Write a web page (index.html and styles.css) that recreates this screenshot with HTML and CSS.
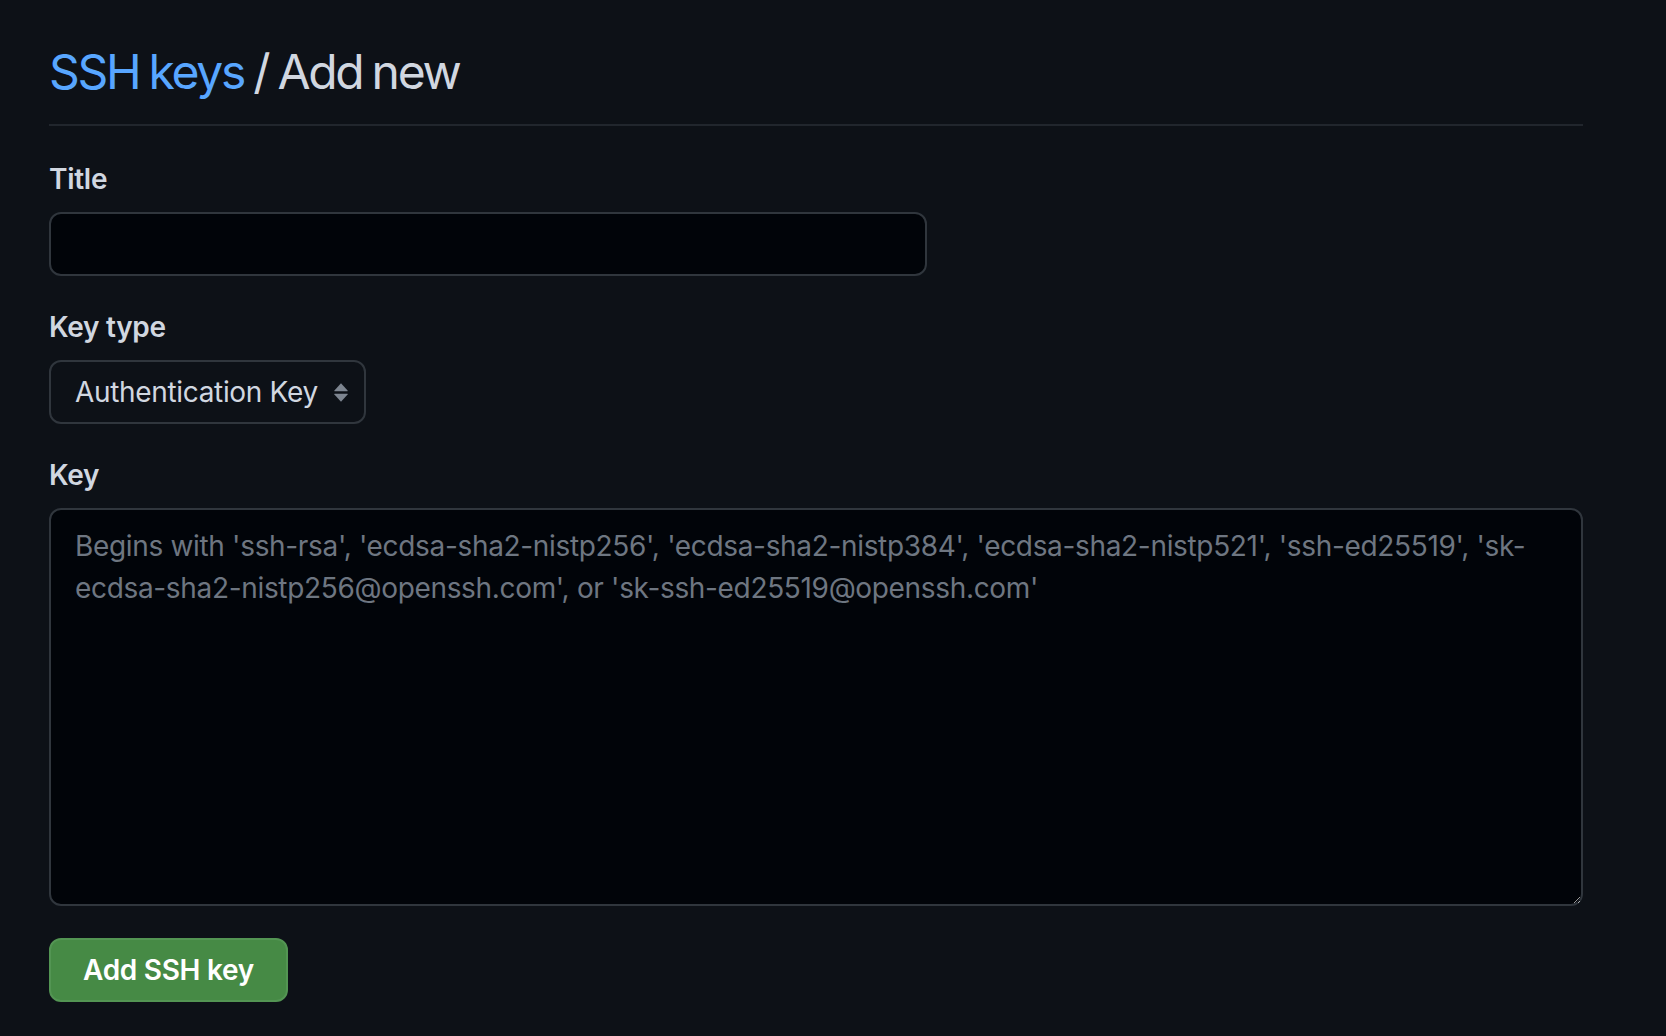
FILE: index.html
```html
<!DOCTYPE html>
<html lang="en">
<head>
<meta charset="utf-8">
<title>SSH keys / Add new</title>
<link rel="stylesheet" href="styles.css">
</head>
<body>
<main class="page">
  <div class="subhead">
    <h1 class="subhead-heading"><a class="subhead-link" href="#">SSH keys</a> / Add new</h1>
  </div>
  <form class="key-form">
    <div class="form-group">
      <label class="form-label" for="title">Title</label>
      <input class="form-input title-input" id="title" type="text">
    </div>
    <div class="form-group">
      <label class="form-label" for="keytype">Key type</label>
      <span class="select-wrap">
        <select class="form-select" id="keytype">
          <option>Authentication Key</option>
          <option>Signing Key</option>
        </select>
        <svg class="select-arrow" width="16" height="21" viewBox="0 0 16 21" aria-hidden="true">
          <path d="M8 1.2 L14.6 8.6 Q15 9.2 14.3 9.2 H1.7 Q1 9.2 1.4 8.6 Z" fill="#7d8590"/>
          <path d="M8 19.8 L14.6 12.4 Q15 11.8 14.3 11.8 H1.7 Q1 11.8 1.4 12.4 Z" fill="#7d8590"/>
        </svg>
      </span>
    </div>
    <div class="form-group form-group-key">
      <label class="form-label" for="key">Key</label>
      <textarea class="form-input key-textarea" id="key" placeholder="Begins with 'ssh-rsa', 'ecdsa-sha2-nistp256', 'ecdsa-sha2-nistp384', 'ecdsa-sha2-nistp521', 'ssh-ed25519', 'sk-ecdsa-sha2-nistp256@openssh.com', or 'sk-ssh-ed25519@openssh.com'"></textarea>
    </div>
    <div class="form-actions">
      <button class="btn-primary" type="button">Add SSH key</button>
    </div>
  </form>
</main>
</body>
</html>
```

FILE: styles.css
```css
html, body {
  margin: 0;
  padding: 0;
  background: #0d1117;
  color-scheme: dark;
}

body {
  font-family: Inter, "Noto Sans", "Liberation Sans", sans-serif;
  color: #c9d1d9;
}

.page {
  width: 1534px;
  padding: 36px 0 0 49px;
}

.subhead {
  padding-bottom: 16px;
  border-bottom: 2px solid #21262d;
  margin-bottom: 33px;
}

.subhead-heading {
  margin: 0;
  font-size: 48px;
  line-height: 72px;
  font-weight: 400;
  color: #d1d7e0;
  letter-spacing: -2.3px;
  word-spacing: -2px;
}

.subhead-link {
  color: #58a6ff;
  text-decoration: none;
}

.form-group {
  display: flex;
  flex-direction: column;
  align-items: flex-start;
  margin-bottom: 31px;
}

.form-group-key {
  margin-bottom: 32px;
}

.form-label {
  font-size: 28px;
  line-height: 40px;
  font-weight: 600;
  color: #d1d7e0;
  letter-spacing: -0.3px;
  margin-bottom: 13px;
}

.form-input {
  box-sizing: border-box;
  background: #010409;
  border: 2px solid #30363d;
  border-radius: 12px;
  color: #c9d1d9;
  font-family: inherit;
  font-size: 28px;
  letter-spacing: -0.33px;
  outline: none;
}

.title-input {
  width: 878px;
  height: 64px;
  padding: 0 24px;
}

.select-wrap {
  position: relative;
  display: inline-block;
}

.form-select {
  appearance: none;
  -webkit-appearance: none;
  box-sizing: border-box;
  width: 317px;
  height: 64px;
  padding: 0 40px 0 24px;
  background: #0d1117;
  border: 2px solid #30363d;
  border-radius: 12px;
  color: #d1d7e0;
  font-family: inherit;
  font-size: 28px;
  letter-spacing: -0.33px;
  outline: none;
}

.select-arrow {
  position: absolute;
  left: 284px;
  top: 22px;
  pointer-events: none;
}

.key-textarea {
  width: 1534px;
  height: 398px;
  padding: 15px 24px;
  line-height: 42px;
  resize: vertical;
  display: block;
}

.key-textarea::placeholder {
  color: #6e7681;
  opacity: 1;
}

.form-actions {
  display: flex;
}

.btn-primary {
  box-sizing: border-box;
  height: 64px;
  padding: 0 32px;
  background: #468a45;
  border: 2px solid #539553;
  border-radius: 12px;
  color: #ffffff;
  font-family: inherit;
  font-size: 28px;
  font-weight: 600;
  letter-spacing: -0.3px;
  cursor: pointer;
}
```
